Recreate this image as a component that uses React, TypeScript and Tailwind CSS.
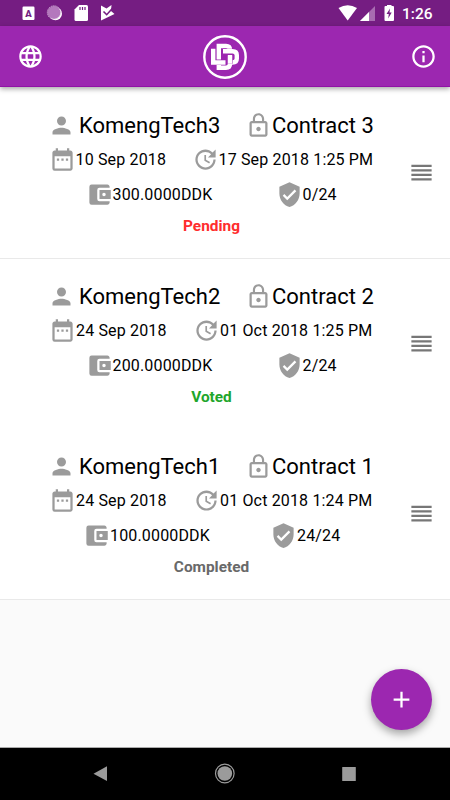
import React from "react";
import {
  MdPerson, MdLockOutline, MdDateRange, MdUpdate, MdAccountBalanceWallet,
  MdVerifiedUser, MdReorder, MdLanguage, MdInfoOutline, MdAdd,
} from "react-icons/md";

type Contract = {
  name: string; title: string; start: string; end: string; amount: string; votes: string;
  status: string; statusClass: string; dateClass: string; endClass: string;
  amountClass: string; votesClass: string; rowClass: string; bodyClass: string; handleClass: string;
};

const contracts: Contract[] = [
  {
    name: "KomengTech3", title: "Contract 3", start: "10 Sep 2018", end: "17 Sep 2018 1:25 PM",
    amount: "300.0000DDK", votes: "0/24", status: "Pending", statusClass: "text-[#ff2d2d]",
    dateClass: "pl-[48.5px]", endClass: "w-[143px]", amountClass: "pl-[85.5px]", votesClass: "w-[190px]",
    rowClass: "h-[172px] border-[#e9e9e9]", bodyClass: "pt-[23px]", handleClass: "",
  },
  {
    name: "KomengTech2", title: "Contract 2", start: "24 Sep 2018", end: "01 Oct 2018 1:25 PM",
    amount: "200.0000DDK", votes: "2/24", status: "Voted", statusClass: "text-[#1fa62b]",
    dateClass: "pl-[49px]", endClass: "w-[144px]", amountClass: "pl-[85.5px]", votesClass: "w-[190px]",
    rowClass: "h-[170px] border-transparent", bodyClass: "pt-[22px]", handleClass: "",
  },
  {
    name: "KomengTech1", title: "Contract 1", start: "24 Sep 2018", end: "01 Oct 2018 1:24 PM",
    amount: "100.0000DDK", votes: "24/24", status: "Completed", statusClass: "text-[#696969]",
    dateClass: "pl-[49px]", endClass: "w-[144px]", amountClass: "pl-[83px]", votesClass: "w-[187px]",
    rowClass: "h-[171px] border-[#e9e9e9]", bodyClass: "pt-[22px]", handleClass: "mb-[2px]",
  },
];

const icon = "h-[27px] w-[27px] shrink-0 text-[#9b9b9b]";

function Row({ c }: { c: Contract }) {
  return (
    <li className={`flex items-center border-b bg-white text-black ${c.rowClass}`}>
      <div className={`flex h-full w-[408px] shrink-0 flex-col whitespace-nowrap ${c.bodyClass}`}>
        <div className="flex h-[30px] items-center pl-[48px] text-[22px] leading-[28px]">
          <div className="flex w-[197px] items-center gap-[4px]"><MdPerson className={icon} /><span className="pt-[2px]">{c.name}</span></div>
          <div className="flex items-center"><MdLockOutline className={icon} /><span className="pt-[2px]">{c.title}</span></div>
        </div>
        <div className={`mt-[4.5px] flex h-[30px] items-center text-[16px] tracking-[0.16px] ${c.dateClass}`}>
          <div className={`flex items-center ${c.endClass}`}><MdDateRange className={icon} /><span>{c.start}</span></div>
          <div className="flex items-center"><MdUpdate className={icon} /><span>{c.end}</span></div>
        </div>
        <div className={`mt-[5px] flex h-[30px] items-center text-[16px] tracking-[0.16px] ${c.amountClass}`}>
          <div className={`flex items-center ${c.votesClass}`}><MdAccountBalanceWallet className={icon} /><span>{c.amount}</span></div>
          <div className="flex items-center"><MdVerifiedUser className={icon} /><span>{c.votes}</span></div>
        </div>
        <div className={`mt-[6.5px] w-[423px] text-center text-[15.4px] font-bold leading-[20px] ${c.statusClass}`}>{c.status}</div>
      </div>
      <MdReorder className={`h-[27px] w-[27px] shrink-0 text-[#777] ${c.handleClass}`} />
    </li>
  );
}

const logoStrokes = [
  "M16.8 31V33.700H24Q28 33.700 28 29.700V22",
  "M11.200 14.700V28.500H23.500",
  "M16.800 25.500V12H24Q28 12 28 16V19",
  "M21 17.300H30.500Q34.800 17.300 34.800 21.300V24.500Q34.800 28.500 30.500 28.500H30",
  "M28 21V29.700",
];

function Logo() {
  return (
    <svg className="h-[46px] w-[46px]" viewBox="0 0 46 46" fill="none">
      <circle cx="23" cy="23" r="20.700" stroke="white" strokeWidth="2.400" />
      {logoStrokes.map((d) => (
        <g key={d}>
          <path d={d} stroke="#9c27b0" strokeWidth="5.200" />
          <path d={d} stroke="white" strokeWidth="4.400" />
        </g>
      ))}
    </svg>
  );
}

function StatusBar() {
  return (
    <div className="flex h-[26px] shrink-0 items-center bg-[#751d82] text-white">
      <svg className="h-[26px] w-[120px]" viewBox="0 0 120 26">
        <rect x="22.500" y="6.500" width="12" height="13.500" rx="1.200" fill="white" />
        <text x="28.500" y="17" textAnchor="middle" fontFamily="Roboto" fontWeight="900" fontSize="9.500" fill="#751d82">A</text>
        <circle cx="55.500" cy="13.700" r="6.500" fill="#fff" />
        <circle cx="54" cy="12.500" r="6.500" fill="#b478bd" />
        <circle cx="54" cy="12.500" r="6.700" fill="none" stroke="#dcc3e0" strokeWidth="1" strokeDasharray="1 1" />
        <path d="M79 5h7.500q1.500 0 1.500 1.500v13q0 1.500-1.500 1.500h-10.500q-1.500 0-1.500-1.500V9.500z" fill="white" />
        <path d="M80 7v3M82.500 7v3M85 7v3" stroke="#751d82" strokeWidth="1.200" />
        <path d="M101 5.500l5.500 3 5-3.500-.5 6 3.500 3-13.500 6.500z" fill="white" />
        <path d="M103.500 11.500l3.200 3.200 6.500-7.200" stroke="#751d82" strokeWidth="1.600" fill="none" />
      </svg>
      <svg className="ml-auto h-[26px] w-[62px]" viewBox="335 0 62 26">
        <path d="M338.500 8Q347.700 2.500 357 8L347.700 20.500z" fill="white" />
        <path d="M375 6v15h-15z" fill="#a86cb1" />
        <path d="M369 12v9h-9z" fill="white" />
        <path d="M385.500 6h1.500V5h4.500v1h1.500q1 0 1 1v13q0 1-1 1h-7.500q-1 0-1-1V7q0-1 1-1z" fill="white" />
        <path d="M390 8.500l-3.500 5.500h2.300l-.6 4.500 3.500-6h-2.200z" fill="#751d82" />
      </svg>
      <span className="mr-4 w-[37px] whitespace-nowrap pl-[5px] pt-[3px] text-[15.5px] font-medium leading-none">1:26</span>
    </div>
  );
}

export default function App() {
  return (
    <div className="relative flex h-[800px] w-[450px] flex-col overflow-hidden bg-[#fafafa] font-['Roboto','Liberation_Sans',sans-serif]">
      <StatusBar />
      <header className="relative z-10 flex h-[61px] shrink-0 items-center border-b border-[#9013a5] bg-[#9c27b0] pt-px text-white shadow-[0_2px_5px_rgba(0,0,0,0.35)]">
        <MdLanguage className="ml-[17px] h-[27px] w-[27px]" />
        <div className="ml-[158px]"><Logo /></div>
        <MdInfoOutline className="ml-auto mr-[13px] h-[27px] w-[27px]" />
      </header>
      <ul className="shrink-0">
        {contracts.map((c) => <Row key={c.name} c={c} />)}
      </ul>
      <button className="absolute left-[371px] top-[669px] flex h-[61px] w-[61px] items-center justify-center rounded-full bg-[#9c27b0] text-white shadow-[0_4px_8px_rgba(0,0,0,0.35)]">
        <MdAdd className="h-[27px] w-[27px]" />
      </button>
      <nav className="mt-auto flex h-[53px] shrink-0 items-center border-t border-[#aaa] bg-black">
        <svg className="h-[52px] w-[450px]" viewBox="0 748 450 52" fill="#9b9b9b">
          <path d="M93.500 773.700L107 766.300v14.800z" />
          <circle cx="224.800" cy="773.500" r="7.300" />
          <circle cx="224.800" cy="773.500" r="9.300" fill="none" stroke="#9b9b9b" strokeWidth="1.200" />
          <rect x="342.200" y="767" width="13.600" height="14" rx=".5" />
        </svg>
      </nav>
    </div>
  );
}
